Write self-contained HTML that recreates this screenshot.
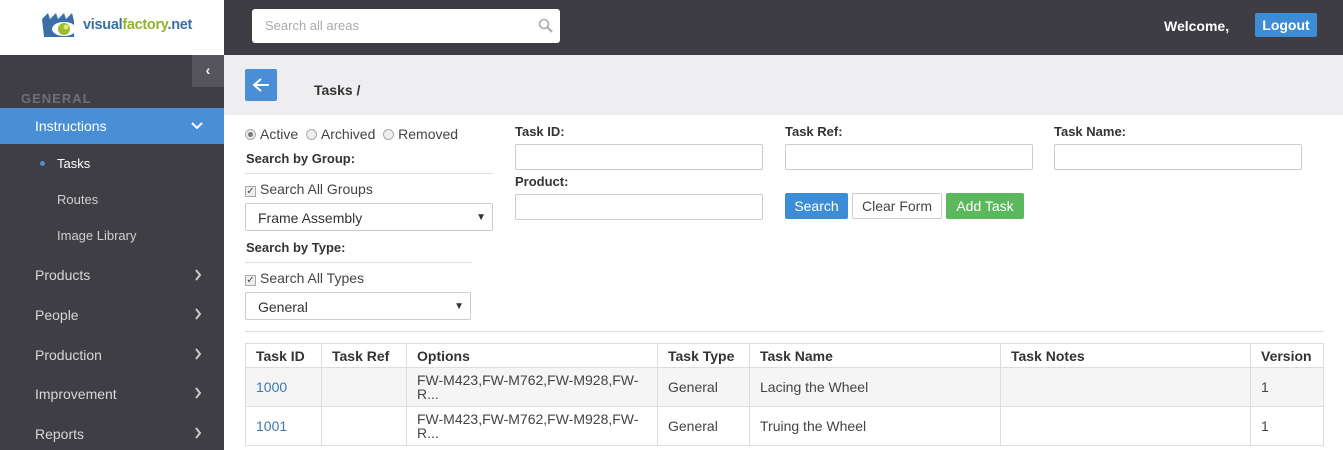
<!DOCTYPE html>
<html><head><meta charset="utf-8"><style>
*{box-sizing:border-box;margin:0;padding:0}
html,body{width:1343px;height:450px;overflow:hidden}
body{position:relative;font-family:"Liberation Sans",Arial,sans-serif;background:#fff;color:#333;font-size:14px}
.a{position:absolute}
.side{left:0;top:55px;width:224px;height:395px;background:#3f3e44}
.nav{left:35px;color:#d8d8d8;font-size:14px}
.sub{left:57px;color:#d0d0d0;font-size:13px}
.inp{border:1px solid #ccc;border-radius:2px;height:26px;background:#fff}
.lbl{font-size:13px;font-weight:bold;color:#333}
.sel{border:1px solid #ccc;border-radius:2px;height:28px;background:#fff;font-size:14px;padding:6px 12px}
table{border-collapse:collapse;font-size:14px}
td,th{border:1px solid #ddd;text-align:left;padding:0 10px;vertical-align:middle}
th{height:24px;font-weight:bold}
td{height:39px;color:#444}
tr.g td{background:#f5f5f5}
.rad{display:inline-block;width:11px;height:11px;border:1px solid #aaa;border-radius:50%;background:#eee;vertical-align:-1px;margin-right:4px}
.chk{display:inline-block;width:11px;height:11px;border:1px solid #aaa;background:#eee;vertical-align:0px;margin-right:4px;font-size:10px;line-height:9px;text-align:center}
</style></head><body>
<div class="a" style="left:0;top:0;width:224px;height:55px;background:#fff"></div>
<svg class="a" style="left:40px;top:11px" width="42" height="30" viewBox="0 0 42 30">
<path d="M2 8 L8 2 L10 8 L16 2 L18 8 L24 2 L26 8 L32 2 L34 10 L34 26 L4 26 Z" fill="#3a6fa8"/>
<ellipse cx="24" cy="18" rx="12" ry="7" fill="#fff"/>
<circle cx="24" cy="18" r="6" fill="#9bbd2a"/><circle cx="26" cy="16" r="2.5" fill="#dfe87a"/>
</svg>
<div class="a" style="left:83px;top:17px;font-size:14.5px;font-weight:bold;letter-spacing:-0.3px"><span style="color:#3a6fa8">visual</span><span style="color:#8fb52a">factory</span><span style="color:#3a6fa8">.net</span></div>
<div class="a" style="left:224px;top:0;width:1119px;height:55px;background:#3e3d43"></div>
<div class="a" style="left:252px;top:9px;width:308px;height:34px;background:#fff;border-radius:3px;color:#aaa;font-size:13px;padding:9px 13px">Search all areas</div>
<svg class="a" style="left:538px;top:18px" width="15" height="15" viewBox="0 0 15 15"><circle cx="6" cy="6" r="4.5" stroke="#aaa" stroke-width="1.6" fill="none"/><path d="M9.5 9.5L14 14" stroke="#aaa" stroke-width="2"/></svg>
<div class="a" style="left:1164px;top:18px;color:#fff;font-size:14px;font-weight:bold">Welcome,</div>
<div class="a" style="left:1255px;top:13px;width:62px;height:24px;background:#3c8dd5;border-radius:2px;color:#fff;font-size:14px;font-weight:bold;text-align:center;line-height:24px">Logout</div>
<div class="side a"></div>
<div class="a" style="left:192px;top:55px;width:32px;height:32px;background:#56555b;color:#fff;text-align:center;line-height:30px;font-weight:bold">&#8249;</div>
<div class="a" style="left:21px;top:91px;color:#6f6e74;font-size:13px;font-weight:bold;letter-spacing:1px">GENERAL</div>
<div class="a" style="left:0;top:108px;width:224px;height:36px;background:#4a8fd6"></div>
<div class="a" style="left:35px;top:118px;color:#fff;font-size:14px">Instructions</div>
<svg class="a" style="left:191px;top:122px" width="12" height="8"><path d="M1 1L6 6L11 1" stroke="#fff" stroke-width="2" fill="none"/></svg>
<div class="a" style="left:40px;top:161px;width:5px;height:5px;border-radius:50%;background:#4a8fd6"></div>
<div class="a sub" style="top:156px;color:#fff">Tasks</div>
<div class="a sub" style="top:192px">Routes</div>
<div class="a sub" style="top:228px">Image Library</div>
<div class="a nav" style="top:267px">Products</div>
<div class="a nav" style="top:307px">People</div>
<div class="a nav" style="top:347px">Production</div>
<div class="a nav" style="top:386px">Improvement</div>
<div class="a nav" style="top:426px">Reports</div>
<svg class="a" style="left:194px;top:269px" width="8" height="180"><g stroke="#ccc" stroke-width="2" fill="none"><path d="M2 1L6 6L2 11"/><path d="M2 40L6 45L2 50"/><path d="M2 80L6 85L2 90"/><path d="M2 119L6 124L2 129"/><path d="M2 159L6 164L2 169"/></g></svg>
<div class="a" style="left:224px;top:55px;width:1119px;height:60px;background:#eeeef0"></div>
<div class="a" style="left:245px;top:69px;width:32px;height:32px;background:#4a8fd6;border-radius:2px"></div>
<svg class="a" style="left:252px;top:77px" width="18" height="16"><path d="M17 8H3M9 2L2 8L9 14" stroke="#fff" stroke-width="2" fill="none"/></svg>
<div class="a" style="left:314px;top:82px;font-weight:bold;font-size:14px;color:#333">Tasks /</div>
<div class="a" style="left:245px;top:126px;font-size:14px;color:#444"><span class="rad" style="background:radial-gradient(#777 2px,#eee 3px)"></span>Active &nbsp;<span class="rad"></span>Archived &nbsp;<span class="rad"></span>Removed</div>
<div class="a lbl" style="left:246px;top:151px">Search by Group:</div>
<div class="a" style="left:245px;top:173px;width:248px;height:1px;background:#ddd"></div>
<div class="a" style="left:245px;top:181px;color:#444"><span class="chk">&#10003;</span>Search All Groups</div>
<div class="a sel" style="left:245px;top:203px;width:248px">Frame Assembly<span style="position:absolute;right:6px;font-size:10px;top:8px">&#9660;</span></div>
<div class="a lbl" style="left:246px;top:240px">Search by Type:</div>
<div class="a" style="left:245px;top:262px;width:227px;height:1px;background:#ddd"></div>
<div class="a" style="left:245px;top:270px;color:#444"><span class="chk">&#10003;</span>Search All Types</div>
<div class="a sel" style="left:245px;top:292px;width:226px">General<span style="position:absolute;right:6px;font-size:10px;top:8px">&#9660;</span></div>
<div class="a lbl" style="left:515px;top:124px">Task ID:</div>
<div class="a inp" style="left:515px;top:144px;width:248px"></div>
<div class="a lbl" style="left:515px;top:174px">Product:</div>
<div class="a inp" style="left:515px;top:194px;width:248px"></div>
<div class="a lbl" style="left:785px;top:124px">Task Ref:</div>
<div class="a inp" style="left:785px;top:144px;width:248px"></div>
<div class="a lbl" style="left:1054px;top:124px">Task Name:</div>
<div class="a inp" style="left:1054px;top:144px;width:248px"></div>
<div class="a" style="left:785px;top:193px;width:63px;height:26px;background:#3c8dd5;border-radius:2px;color:#fff;text-align:center;line-height:26px">Search</div>
<div class="a" style="left:852px;top:193px;width:90px;height:26px;border:1px solid #ccc;border-radius:2px;color:#444;text-align:center;line-height:24px">Clear Form</div>
<div class="a" style="left:946px;top:193px;width:78px;height:26px;background:#5cb85c;border-radius:2px;color:#fff;text-align:center;line-height:26px">Add Task</div>
<div class="a" style="left:245px;top:331px;width:1079px;height:1px;background:#ddd"></div>
<table class="a" style="left:245px;top:343px;width:1079px">
<tr><th style="width:76px">Task ID</th><th style="width:85px">Task Ref</th><th style="width:251px">Options</th><th style="width:92px">Task Type</th><th style="width:251px">Task Name</th><th style="width:250px">Task Notes</th><th>Version</th></tr>
<tr class="g"><td style="color:#3b78b5">1000</td><td></td><td style="line-height:14px">FW-M423,FW-M762,FW-M928,FW-R...</td><td>General</td><td>Lacing the Wheel</td><td></td><td>1</td></tr>
<tr><td style="color:#3b78b5">1001</td><td></td><td style="line-height:14px">FW-M423,FW-M762,FW-M928,FW-R...</td><td>General</td><td>Truing the Wheel</td><td></td><td>1</td></tr>
</table>
</body></html>
